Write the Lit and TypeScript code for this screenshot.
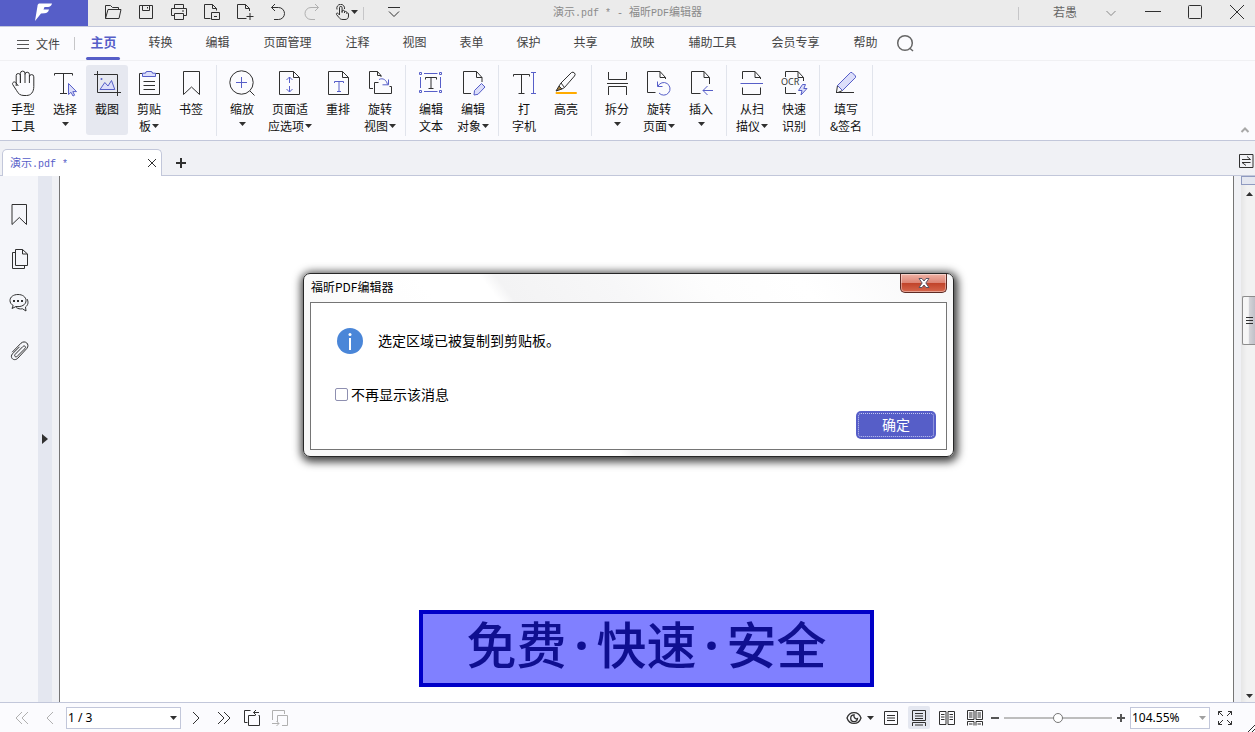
import { LitElement, html, svg, css, nothing } from "lit";
import type { SVGTemplateResult } from "lit";
import { customElement, state } from "lit/decorators.js";
import { classMap } from "lit/directives/class-map.js";

type Glyph = SVGTemplateResult;

/* Ribbon icons, drawn on a 32 x 32 grid. Class "a" is the accent stroke. */
const ribbonIcons: Record<string, Glyph> = {
  hand: svg`<path d="M9.2 19V8.6a2.1 2.1 0 0 1 4.2 0V16M13.4 16V6.4a2.3 2.3 0 0 1 4.6 0V16M18 7.4a2.2 2.2 0 0 1 4.4 0V16M22.4 9.8a2.2 2.2 0 0 1 4.4 0V19.500c0 5.500-2.800 9-7.300 9h-2.500c-3.800 0-5.800-1.800-7.300-4.800l-4-6.200c-.9-2 1.800-3.500 3.200-1.800l2.400 3.300"/>`,
  select: svg`<path d="M5.500 8.500V6.500H23.500V8.500M14.500 6.500V26.500M11 26.500H18"/><path class="a f" d="M19.500 16.500V27.500L22 25.300L24 29L25.600 28.200L23.800 24.600H27.500Z"/>`,
  crop: svg`<path d="M6.500 4V25.500H30M3 7.500H26.500V29"/><path class="a f" d="M9 22.500L13.800 15.500L17 19L20.500 13.500L23.800 22.500Z"/><circle class="dot" cx="10.500" cy="12" r="1"/>`,
  clipboard: svg`<path d="M9.500 6.500H6.500V27.500H26.500V6.500H22.500M10.500 14.500H22M10.500 18.500H22M10.500 22.500H22"/><path class="a f" d="M9.500 9.500V6.200H12.500Q12.500 4.500 14 4.500H18Q19.500 4.500 19.500 6.200H22.500V9.500Z"/>`,
  bookmark: svg`<path d="M8.500 4.500H24.500V27.500L16.500 20L8.500 27.500Z"/>`,
  zoom: svg`<circle cx="15.500" cy="15.500" r="11.700"/><path d="M24 24L28.500 28.500"/><path class="a" d="M10 15.500H21M15.500 10V21"/>`,
  fit: svg`<path d="M19.500 4.500H5.500V27.500H25.500V10.500L19.500 4.500V10.500H25.500"/><path class="a" d="M15.500 10V16M12.500 13L15.500 10L18.500 13M15.500 19V25M12.500 22L15.500 25L18.500 22"/>`,
  reflow: svg`<path d="M20.500 4.500H6.500V27.500H26.500V10.500L20.500 4.500V10.500H26.500"/><path class="a" d="M12.500 16V14.500H21.500V16M17 14.500V24.500M15 24.500H19"/>`,
  rotateView: svg`<path d="M9 21.500H5.500V4.500H13.500L17 8.500V10M13.500 4.500V8.500H17M14.500 15.500H10.500V26.500H27.500V19.500H25.500"/><path class="a" d="M15 12.500C19 10.500 22.500 13 23.500 17.500M24.500 12.500V17.800H18.500"/>`,
  editText: svg`<path d="M10.500 12.500V10.500H21.500V12.500M16 10.500V21.500M13.500 21.500H18.500"/><path class="a" d="M9 6.500H22.500M9 24.500H22.500M5.500 10V21M25.500 10V21M4.500 5.500h2v2h-2zM24.500 5.500h2v2h-2zM4.500 23.500h2v2h-2zM24.500 23.500h2v2h-2z"/>`,
  editObject: svg`<path d="M14 26.500H6.500V4.500H19.500L25 10.500V15M19.500 4.500V10.500H25"/><path class="a f" d="M17 28L17.500 23.500L24.500 16.500L28 20L21 27.300Z"/>`,
  typewriter: svg`<path d="M5.500 9.500V7.500H21.500V9.500M13.500 7.500V26.500M10.500 26.500H16.500"/><path class="a" d="M25.500 5.500V26.500M23 5.500H28M23 26.500H28"/>`,
  highlight: svg`<path d="M11 16L21.500 5.500Q23 4.500 24.500 6Q25.800 7.500 24.500 9L14.500 20.500ZM11 16L9 19L12 22L14.500 20.500"/><path class="pen" d="M6 24L9 19L12 22Z"/><path class="orange" d="M6.500 26H26"/>`,
  split: svg`<path d="M7.500 5V12.500H25.500V5M6 16.500H27M7.500 28V19.500H25.500V28"/>`,
  rotatePage: svg`<path d="M12.500 25.500H4.500V4.500H17L22.500 10.500V12M17 4.500V10.500H22.500"/><path class="a" d="M14.500 14.500V19.500H19.500M15 19.200A6.300 6.300 0 1 1 16 26"/>`,
  insert: svg`<path d="M15.500 26.500H6.500V4.500H19L24.500 10.500V17M19 4.500V10.500H24.500"/><path class="a" d="M28 23.500H18M22.500 19L18 23.500L22.500 28"/>`,
  scan: svg`<path d="M6.500 12V4.500H19L24.500 10.500V12M19 4.500V10.500H24.500M6.500 20.500V27.500H24.500V20.500"/><path class="a" d="M4.500 16.500H27"/>`,
  ocr: svg`<path d="M7.500 10V4.500H20L25.500 10.500V14M20 4.500V10.500H25.500M7.500 20V26.500H18"/><text x="3" y="18" class="ocr">OCR</text><path class="a f" d="M24.500 17.500L20.500 23.500H24L23 28L29 21.500H25.800L27.500 17.500Z"/>`,
  sign: svg`<path d="M6 25.500H24M6.500 25L7.500 18.500L12.500 23.500L8 25.500"/><path class="a f" d="M7.500 18.500L20.500 5.500H22L25.500 9V10.500L12.500 23.500Z"/>`,
};

/* Quick-access icons, 20 x 20. */
const quickIcons: Record<string, Glyph> = {
  open: svg`<path d="M2.500 16.500V3.500H7.500L9.500 5.500H15.500V7.500M2.500 16.500L5 7.500H18L16 16.500Z"/>`,
  save: svg`<path d="M3.500 3.500H16.500V16.500H3.500ZM6.500 3.500V8.500H13.500V3.500M11.500 5V6.500"/>`,
  print: svg`<path d="M5.500 6.500V2.500H14.500V6.500M5.500 13.500H2.500V6.500H17.500V13.500H14.500M5.500 11.500H14.500V17.500H5.500ZM13 9H15"/>`,
  pageBox: svg`<path d="M8.500 16.500H2.500V2.500H10.500L14.500 6.500V8.500M10.500 2.500V6.500H14.500M9.500 10.500H17.500V17.500H9.500ZM12 14.500H15"/>`,
  pageAdd: svg`<path d="M11.500 16.500H2.500V2.500H10.500L14.500 6.500V9M10.500 2.500V6.500H14.500M11.500 14.500H18.500M15 11V18"/>`,
  undo: svg`<path d="M7 2L3.500 5.500L7 9M3.500 5.500H10.500A5.600 5.600 0 0 1 10.500 17.500H6"/>`,
  redo: svg`<path class="dim" d="M14 2L17.500 5.500L14 9M17.500 5.500H10A5.600 5.600 0 0 0 10 17.500H14"/>`,
};

const viewIcons: Glyph[] = [
  svg`<path d="M3.500 3.500H16.500V16.500H3.500ZM6 7.500H14M6 10H14M6 12.500H14"/>`,
  svg`<path d="M3.500 2.500H16.500V12.500H3.500ZM6 5.500H14M6 8H14M6 10.500H14M3.500 18V14.500H16.500V18M6 17H14"/>`,
  svg`<path d="M2.500 3.500H9V16.500H2.500ZM11 3.500H17.500V16.500H11ZM4 6.500H7.500M4 9H7.500M4 11.500H7.500M12.500 6.500H16M12.500 9H16M12.500 11.500H16"/>`,
  svg`<path d="M2.500 2.500H9V11.500H2.500ZM11 2.500H17.500V11.500H11ZM4 5H7.500M4 7H7.500M4 9H7.500M12.500 5H16M12.500 7H16M12.500 9H16M2.500 17.500V13.500H9V17.500M11 17.500V13.500H17.500V17.500M4 16H7.500M12.500 16H16"/>`,
];

interface Tool {
  icon: string;
  lines: string[];
  menu?: boolean;
  wide?: boolean;
}

const groups: Tool[][] = [
  [
    { icon: "hand", lines: ["手型", "工具"] },
    { icon: "select", lines: ["选择", ""], menu: true },
    { icon: "crop", lines: ["截图"] },
    { icon: "clipboard", lines: ["剪贴", "板"], menu: true },
    { icon: "bookmark", lines: ["书签"] },
  ],
  [
    { icon: "zoom", lines: ["缩放", ""], menu: true },
    { icon: "fit", lines: ["页面适", "应选项"], menu: true, wide: true },
    { icon: "reflow", lines: ["重排"] },
    { icon: "rotateView", lines: ["旋转", "视图"], menu: true },
  ],
  [
    { icon: "editText", lines: ["编辑", "文本"] },
    { icon: "editObject", lines: ["编辑", "对象"], menu: true },
  ],
  [
    { icon: "typewriter", lines: ["打", "字机"] },
    { icon: "highlight", lines: ["高亮"] },
  ],
  [
    { icon: "split", lines: ["拆分", ""], menu: true },
    { icon: "rotatePage", lines: ["旋转", "页面"], menu: true },
    { icon: "insert", lines: ["插入", ""], menu: true },
  ],
  [
    { icon: "scan", lines: ["从扫", "描仪"], menu: true },
    { icon: "ocr", lines: ["快速", "识别"] },
  ],
  [{ icon: "sign", lines: ["填写", "&签名"] }],
];

const tabs = ["主页", "转换", "编辑", "页面管理", "注释", "视图", "表单", "保护", "共享", "放映", "辅助工具", "会员专享", "帮助"];

const sideIcons: { name: string; glyph: Glyph }[] = [
  { name: "书签", glyph: svg`<path d="M5 1.500H19.500V21.500L12.300 14.500L5 21.500Z"/>` },
  { name: "页面", glyph: svg`<path d="M8.500 2.500H15.500L20.500 7V18.500H8.500ZM15.500 2.500V7H20.500M8.500 5.500H5.500V21.500H17.500V18.500"/>` },
  {
    name: "注释",
    glyph: svg`<path d="M11 3.500C6.300 3.500 3 6 3 9.500C3 11.700 4.200 13.400 6.200 14.500L5 17.500L9 15.500C14.500 16.300 19 13.700 19 9.700C19 6 15.700 3.500 11 3.500ZM20 8C21.800 11 21 14.300 18.500 16L19 20L15.500 17.800C13 18.200 10.800 17.700 9.200 16.500"/><path class="dots" d="M6 9h2v2h-2zM10 9h2v2h-2zM14 9h2v2h-2z"/>`,
  },
  { name: "附件", glyph: svg`<path d="M18 9.500L10.300 17.200C8.600 18.800 6.700 17 8.200 15.300L15.800 7.600M15.800 7.600C17.500 6 19.500 7.800 18 9.500M5.200 13.200L14 4.200C18 .6 23.300 5.300 19.800 9.500L10.800 19.200C7 23 2.200 18.500 5.500 14.800L12.500 7.800"/>` },
];

@customElement("app-root")
export class AppRoot extends LitElement {
  @state() private activeTab = "主页";
  @state() private activeTool = "crop";
  @state() private dialogOpen = true;

  static styles = css`
    :host {
      display: flex;
      flex-direction: column;
      position: relative;
      height: 100vh;
      overflow: hidden;
      background: #fbfbfe;
      color: #1c1c1c;
      font-family: "Noto Sans CJK SC", "Noto Sans", sans-serif;
      font-size: 12px;
      line-height: 17px;
    }
    * {
      box-sizing: border-box;
    }
    button {
      display: flex;
      align-items: center;
      justify-content: center;
      margin: 0;
      padding: 0;
      border: 0;
      background: none;
      color: inherit;
      font: inherit;
    }
    svg {
      display: block;
      flex: none;
      fill: none;
      stroke: #303030;
      stroke-width: 1;
    }
    .dim { stroke: #b0b0b0; }
    .a { stroke: #565ec8; }
    .f { fill: #dcdefa; }
    .dot { fill: #565ec8; stroke: none; }
    .dots { fill: #303030; stroke: none; }
    .pen { fill: #a07a3a; }
    .orange { stroke: #ffab00; stroke-width: 2; stroke-linecap: round; }
    .ocr {
      fill: #303030;
      stroke: none;
      font: 9px "Noto Sans", sans-serif;
    }
    .caret { fill: #303030; stroke: none; }
    .caret.soft { fill: #a0a0a0; }

    .titlebar {
      display: grid;
      grid-template-columns: 1fr auto 1fr;
      align-items: center;
      flex: none;
      height: 27px;
      background: #ebebeb;
      border-bottom: 1px solid #c2c7da;
    }
    .quick, .window { display: flex; align-items: center; height: 26px; }
    .window { justify-content: flex-end; gap: 6px; }
    .logo {
      display: flex;
      justify-content: center;
      width: 88px;
      height: 26px;
      margin-right: 8px;
      background: #565ec8;
    }
    .logo path { fill: #fff; stroke: none; }
    .quick button { width: 33px; height: 26px; padding-bottom: 2px; }
    .quick .touch { gap: 2px; width: 36px; }
    .vline { flex: none; width: 1px; height: 13px; background: #c6c6c8; }
    .quick .more { margin-left: 13px; }
    .doc-name {
      font: 10px "Liberation Mono", "Noto Sans CJK SC", monospace;
      color: #8a8a8a;
      line-height: 16px;
      white-space: pre;
    }
    .titlebar .doc-name { padding-bottom: 2px; }
    .doc-name .cjk { font-family: "Noto Sans CJK SC", sans-serif; font-size: 11px; }
    .user { margin: 0 10px 0 28px; padding-bottom: 3px; color: #666; }
    .window button { width: 36px; height: 26px; padding-bottom: 1px; }

    .menubar {
      display: flex;
      align-items: center;
      flex: none;
      height: 34px;
      border-bottom: 1px solid #f0f0f3;
      color: #444;
    }
    .file { gap: 7px; width: 74px; height: 33px; padding-left: 3px; }
    .tabs { display: flex; height: 33px; }
    .tab { position: relative; width: 57px; padding-bottom: 4px; white-space: nowrap; }
    .tab.long { width: 83px; }
    .tab.on { color: #565ec8; font-size: 13px; font-weight: 700; }
    .tab.on::after {
      content: "";
      position: absolute;
      left: 11px;
      right: 12px;
      bottom: 0;
      height: 3px;
      border-radius: 2px;
      background: #565ec8;
    }
    .search { width: 22px; height: 32px; padding-bottom: 1px; }

    .ribbon {
      display: flex;
      align-items: flex-start;
      flex: none;
      height: 80px;
      padding: 4px 2px;
      border-bottom: 1px solid #c2c7da;
    }
    .group { display: flex; }
    .group::after {
      content: "";
      width: 1px;
      height: 71px;
      margin: 0 4px;
      background: #e1e4ec;
    }
    .tool {
      flex-direction: column;
      justify-content: flex-start;
      width: 42px;
      height: 70px;
      padding-top: 2px;
      border-radius: 3px;
      color: #111;
    }
    .tool.wide { width: 54px; }
    .group:last-of-type .tool { width: 44px; }
    .tool.on { background: #e6e8f0; }
    .line {
      display: flex;
      align-items: center;
      justify-content: center;
      gap: 1px;
      height: 17px;
      white-space: nowrap;
    }
    .line.lone { height: 14px; }
    .tool svg + .line { margin-top: 1px; }
    .fold { align-self: flex-end; margin-left: auto; width: 16px; height: 12px; }
    .fold svg { stroke: #a8a8a8; stroke-width: 2; }

    .docbar {
      display: flex;
      align-items: flex-end;
      flex: none;
      height: 35px;
      padding-left: 2px;
      background: #f0f1f5;
      border-bottom: 1px solid #c2c7da;
    }
    .doc-tab {
      display: flex;
      align-items: center;
      justify-content: space-between;
      width: 160px;
      height: 27px;
      margin-bottom: -1px;
      padding: 0 3px 0 7px;
      border: 1px solid #c2c7da;
      border-bottom: 0;
      border-radius: 5px 5px 0 0;
      background: #fff;
    }
    .doc-tab .doc-name { color: #565ec8; text-decoration: none; }
    .doc-tab button, .docbar .add { width: 12px; height: 25px; }
    .docbar .add { margin-left: 13px; }
    .docbar .swap { margin-left: auto; width: 18px; height: 28px; }

    .main { display: flex; flex: 1; min-height: 0; overflow: hidden; }
    .side {
      display: flex;
      flex-direction: column;
      flex: none;
      width: 38px;
      padding-top: 17px;
      background: #f5f6fa;
    }
    .side button { height: 44px; }
    .side button:last-child { margin-top: 4px; }
    .handle { flex: none; width: 14px; background: #e4e7f0; }
    .gutter { flex: none; width: 8px; background: #f0f1f5; border-right: 1px solid #757575; }
    .page {
      display: flex;
      flex-direction: column;
      align-items: center;
      justify-content: flex-end;
      flex: 1;
      min-width: 0;
      padding-bottom: 15px;
      background: #fff;
    }
    .banner {
      padding: 0 43px 12px;
      border: 4px solid #0000c8;
      background: #8080ff;
      color: #0f0f90;
      font-size: 50px;
      font-weight: 500;
      line-height: 57px;
      white-space: nowrap;
    }
    .sep { padding: 0 8px; font-family: "Noto Sans", sans-serif; font-weight: 700; line-height: 1; }
    .edge { flex: none; width: 8px; background: #f0f1f5; border-left: 1px solid #757575; }
    .scroll {
      display: flex;
      flex-direction: column;
      align-items: stretch;
      flex: none;
      width: 14px;
      background: linear-gradient(90deg, #e6e6e6, #f2f2f2 6px);
    }
    .split { height: 9px; border: 1px solid #8f9ac0; border-right: 0; background: #e4e7f0; }
    .scroll button { height: 17px; padding-left: 3px; }
    .scroll button:last-child { height: 12px; }
    .thumb {
      display: flex;
      align-items: center;
      height: 49px;
      margin: 94px 0 auto 1px;
      padding-left: 3px;
      border: 1px solid #8c8c8c;
      border-right: 0;
      border-radius: 2px 0 0 2px;
      background: linear-gradient(90deg, #f6f6f6 45%, #d4d4d8 50%, #c0c0c8);
    }

    .status {
      display: flex;
      align-items: center;
      justify-content: space-between;
      flex: none;
      height: 30px;
      border-top: 1px solid #c2c7da;
    }
    .bar { display: flex; align-items: center; height: 29px; }
    .bar > button { width: 28px; height: 23px; }
    .nav { padding-left: 8px; }
    .box { position: relative; display: flex; align-items: center; }
    .box select {
      appearance: none;
      height: 22px;
      width: 80px;
      margin: 0;
      padding: 0 0 0 1px;
      border: 1px solid #c2c7da;
      border-radius: 0;
      background: #fff;
      color: #000;
      font: 12px "Noto Sans", sans-serif;
    }
    .box.pages { margin: 0 1px 0 2px; }
    .box.pages select { width: 115px; }
    .box .caret { position: absolute; right: 4px; pointer-events: none; }
    .bar .eye { width: 34px; gap: 5px; margin-right: 3px; }
    .bar .view { width: 22px; margin-right: 6px; border-radius: 2px; }
    .bar .view.on { background: #e4e7f0; }
    .bar .step { width: 10px; margin-right: 4px; }
    .bar .step svg { stroke: #555; stroke-width: 2; }
    .slider {
      appearance: none;
      width: 108px;
      height: 12px;
      margin: 0 4px 0 0;
      background: linear-gradient(#bdbdbd, #bdbdbd) center / 100% 2px no-repeat;
    }
    .slider::-webkit-slider-thumb {
      appearance: none;
      width: 10px;
      height: 10px;
      border: 1px solid #777;
      border-radius: 50%;
      background: #fff;
    }
    .views { display: flex; margin-right: -2px; }
    .views button { height: 23px; }
    .bar .full { width: 30px; margin-right: 0; }
    .grip { align-self: flex-end; margin-left: 7px; }

    .dialog {
      position: absolute;
      left: 303px;
      top: 273px;
      display: flex;
      flex-direction: column;
      width: 651px;
      margin: 0;
      padding: 0 6px 6px;
      border: 1px solid #262626;
      border-radius: 7px;
      background: linear-gradient(52deg, #f7f7f7 12%, #fdfdfd 24%, #fff 32%, #fff 40%, #f3f3f4 42%, #f7f7f8 56%, #fdfdfd 68%, #fff 80%, #f7f7f8);
      box-shadow: 1px 2px 9px 3px rgba(0, 0, 0, 0.75);
      color: #000;
    }
    .head {
      display: flex;
      align-items: flex-start;
      justify-content: space-between;
      height: 28px;
    }
    .head h1 { margin: 0; padding: 4px 0 0 1px; font-size: 12px; font-weight: 400; }
    .close {
      width: 47px;
      height: 19px;
      border: 1px solid #5c2a24;
      border-top: 0;
      border-radius: 0 0 5px 5px;
      background: linear-gradient(#f0b3a6, #dd8575 48%, #c04229 50%, #d6674d);
      box-shadow: inset 0 0 0 1px rgba(255, 255, 255, 0.4);
    }
    .body {
      display: flex;
      flex-direction: column;
      height: 148px;
      padding: 24px 10px 10px 24px;
      border: 1px solid #757575;
      background: #fff;
      font-size: 14px;
      line-height: 20px;
    }
    .message { display: flex; align-items: center; gap: 14px; margin: 0; padding-left: 1px; height: 28px; }
    .message span { padding-bottom: 2px; }
    .again { display: flex; align-items: center; gap: 3px; margin-top: 29px; }
    .again input {
      appearance: none;
      width: 13px;
      height: 13px;
      margin: 0;
      border: 1px solid #8e8fb0;
      border-radius: 2px;
      background: #fff;
    }
    .ok {
      align-self: flex-end;
      margin-top: auto;
      width: 80px;
      height: 28px;
      padding-bottom: 2px;
      border-radius: 5px;
      background: #565ec8;
      color: #fff;
      outline: 1px dotted #c5c8f2;
      outline-offset: -3px;
    }
  `;

  private icon(size: number, glyph: Glyph) {
    return html`<svg width=${size} height=${size} viewBox="0 0 ${size} ${size}" aria-hidden="true">${glyph}</svg>`;
  }

  private caret(soft = false) {
    return html`<svg class=${classMap({ caret: true, soft })} width="7" height="4" viewBox="0 0 7 4" aria-hidden="true"><path d="M0 0H7L3.500 4Z" /></svg>`;
  }

  private docName(rest: unknown = nothing) {
    return html`<span class="cjk">演示</span>.pdf *${rest}`;
  }

  private renderTitle() {
    return html`<header class="titlebar">
      <div class="quick">
        <div class="logo">
          <svg width="24" height="26" viewBox="0 0 24 26" role="img" aria-label="福昕"><path d="M7 3.500H20C19.500 5.500 18 7 16 7H12.500L11.500 9.500H17C16.300 12 15 13.200 12.500 13.300L9 13.600L3 21L5.500 6C5.700 4.500 6 4 7 3.500Z" /></svg>
        </div>
        ${Object.entries(quickIcons).map(([name, g]) => html`<button aria-label=${name}>${this.icon(20, g)}</button>`)}
        <button class="touch" aria-label="touch">
          ${this.icon(16, svg`<path d="M6.500 11V3.700a1.300 1.300 0 0 1 2.600 0V8.500V7.500a1.200 1.200 0 0 1 2.400 0V9V8.500a1.100 1.100 0 0 1 2.200 0V9.500a1 1 0 0 1 1.800 0V12C15.500 14.500 14 15.500 12 15.500H10C8 15.500 7 15 6 13.500L3.500 10.500C2.800 9.300 4.300 8.500 5.200 9.500L6.500 11M4 5.500A3.900 3.900 0 1 1 11.500 5"/>`)}
          ${this.caret()}
        </button>
        <span class="vline"></span>
        <button class="more" aria-label="more">${this.icon(16, svg`<path d="M2 3.500H14M3 7.500L8 12.500L13 7.500"/>`)}</button>
      </div>
      <div class="doc-name">${this.docName(html` - <span class="cjk">福昕</span>PDF<span class="cjk">编辑器</span>`)}</div>
      <div class="window">
        <span class="vline"></span>
        <span class="user">若愚</span>
        <button aria-label="account">${this.icon(12, svg`<path stroke="#888" d="M1.500 4L6 8.500L10.500 4"/>`)}</button>
        <button aria-label="minimize">${this.icon(20, svg`<path d="M2 8.500H18"/>`)}</button>
        <button aria-label="maximize">${this.icon(20, svg`<rect x="3.500" y="2.500" width="13" height="13" rx="1"/>`)}</button>
        <button aria-label="close">${this.icon(20, svg`<path d="M3 2L17 16M17 2L3 16"/>`)}</button>
      </div>
    </header>`;
  }

  private renderMenu() {
    return html`<nav class="menubar">
      <button class="file">${this.icon(12, svg`<path stroke="#555" d="M0 2.500H12M0 6.500H12M0 10.500H12"/>`)}文件</button>
      <span class="vline"></span>
      <div class="tabs">
        ${tabs.map(
          (t) => html`<button
            class=${classMap({ tab: true, long: t.length > 2, on: t === this.activeTab })}
            @click=${() => (this.activeTab = t)}
          >${t}</button>`,
        )}
      </div>
      <button class="search" aria-label="search">${this.icon(20, svg`<g stroke="#666" stroke-width="1.500"><circle cx="10" cy="10" r="7.300"/><path d="M14.500 15L18 18"/></g>`)}</button>
    </nav>`;
  }

  private renderTool(t: Tool) {
    return html`<button
      class=${classMap({ tool: true, wide: !!t.wide, on: t.icon === this.activeTool })}
      aria-label=${t.lines.join("")}
      @click=${() => (this.activeTool = t.icon)}
    >
      ${this.icon(32, ribbonIcons[t.icon])}
      ${t.lines.map(
        (l, i) => html`<span class=${classMap({ line: true, lone: l === "" })}>${l}${t.menu && i === 1 ? this.caret() : nothing}</span>`,
      )}
    </button>`;
  }

  private renderDialog() {
    return html`<section class="dialog" role="dialog" aria-labelledby="dialog-title">
      <div class="head">
        <h1 id="dialog-title">福昕PDF编辑器</h1>
        <button class="close" aria-label="关闭" @click=${() => (this.dialogOpen = false)}>
          <svg width="14" height="12" viewBox="0 0 14 12"><path d="M2 1.500H5L7 4L9 1.500H12L8.800 6L12 10.500H9L7 8L5 10.500H2L5.200 6Z" fill="#fff" stroke="#5a5563" /></svg>
        </button>
      </div>
      <div class="body">
        <p class="message">
          <svg width="28" height="28" viewBox="0 0 28 28" aria-hidden="true"><circle cx="14" cy="14" r="13" fill="#4a86d8" stroke="none" /><path d="M14 11V23" stroke="#fff" stroke-width="2" /><circle cx="14" cy="7.500" r="1.500" fill="#fff" stroke="none" /></svg>
          <span>选定区域已被复制到剪贴板。</span>
        </p>
        <label class="again"><input type="checkbox" />不再显示该消息</label>
        <button class="ok" @click=${() => (this.dialogOpen = false)}>确定</button>
      </div>
    </section>`;
  }

  private renderStatus() {
    return html`<footer class="status">
      <div class="bar nav">
        <button aria-label="first">${this.icon(16, svg`<path class="dim" d="M8 2L2 8L8 14M14 2L8 8L14 14"/>`)}</button>
        <button aria-label="previous">${this.icon(16, svg`<path class="dim" d="M11 2L5 8L11 14"/>`)}</button>
        <div class="box pages">
          <select aria-label="page"><option>1 / 3</option><option>2 / 3</option><option>3 / 3</option></select>${this.caret()}
        </div>
        <button aria-label="next">${this.icon(16, svg`<path d="M5 2L11 8L5 14"/>`)}</button>
        <button aria-label="last">${this.icon(16, svg`<path d="M2 2L8 8L2 14M8 2L14 8L8 14"/>`)}</button>
        <button aria-label="back">${this.icon(20, svg`<path d="M5.500 14.500H2.500V2.500H8.500M13.500 7.500H6.500V17.500H17.500V7.500H16.500M17 4.500H11.500M14 2L11.500 4.500L14 7"/>`)}</button>
        <button aria-label="forward">${this.icon(20, svg`<path class="dim" d="M2.500 12V2.500H14.500V6M7.500 14V7.500H17.500V17.500H12M2 15.500H9M6.500 13L9 15.500L6.500 18"/>`)}</button>
      </div>
      <div class="bar">
        <button class="eye" aria-label="reading mode">
          ${this.icon(16, svg`<path stroke-width="1.300" d="M1 8C3.500 .8 12.500 .8 15 8C12.500 15.200 3.500 15.200 1 8Z"/><path stroke-width="1.300" d="M8 4.800A3.400 3.400 0 1 0 11.500 8.500C9.500 9.500 7.500 7.500 8 4.800Z"/>`)}${this.caret()}
        </button>
        <div class="views">
          ${viewIcons.map((g, i) => html`<button class=${classMap({ view: true, on: i === 1 })} aria-label=${`view ${i + 1}`}>${this.icon(20, g)}</button>`)}
        </div>
        <button class="step" aria-label="zoom out">${this.icon(10, svg`<path d="M1 5H9"/>`)}</button>
        <input class="slider" type="range" min="0" max="100" value="50" aria-label="zoom" />
        <button class="step" aria-label="zoom in">${this.icon(10, svg`<path d="M1 5H9M5 1V9"/>`)}</button>
        <div class="box"><select aria-label="zoom level"><option>104.55%</option><option>100%</option></select>${this.caret(true)}</div>
        <button class="full" aria-label="full screen">${this.icon(16, svg`<path d="M1.500 5V1.500H5M1.500 1.500L6 6M11 1.500H14.500V5M14.500 1.500L10 6M1.500 11V14.500H5M1.500 14.500L6 10M11 14.500H14.500V11M14.500 14.500L10 10"/>`)}</button>
        <svg class="grip" width="8" height="8" viewBox="0 0 8 8"><path d="M1 8L8 1M5 8L8 5" /></svg>
      </div>
    </footer>`;
  }

  render() {
    return html`
      ${this.renderTitle()} ${this.renderMenu()}
      <div class="ribbon">
        ${groups.map((g) => html`<div class="group">${g.map((t) => this.renderTool(t))}</div>`)}
        <button class="fold" aria-label="collapse ribbon">${this.icon(10, svg`<path d="M1.500 7L5 3.500L8.500 7"/>`)}</button>
      </div>
      <div class="docbar">
        <div class="doc-tab">
          <a class="doc-name" href="#doc">${this.docName()}</a>
          <button aria-label="close tab">${this.icon(10, svg`<path d="M1 1L9 9M9 1L1 9"/>`)}</button>
        </div>
        <button class="add" aria-label="new tab">${this.icon(12, svg`<path stroke-width="2" d="M1 6H11M6 1V11"/>`)}</button>
        <button class="swap" aria-label="switch">${this.icon(16, svg`<path d="M1.500 1.500H15V14.500H1.500ZM4 6.500H12.500L9 3.500M12.500 9.500H4L8 12.500"/>`)}</button>
      </div>
      <main class="main">
        <aside class="side">
          ${sideIcons.map((s) => html`<button aria-label=${s.name}>${this.icon(24, s.glyph)}</button>`)}
        </aside>
        <button class="handle" aria-label="expand panel"><svg class="caret" width="6" height="10" viewBox="0 0 6 10"><path d="M0 0L6 5L0 10Z" /></svg></button>
        <div class="gutter"></div>
        <article class="page">
          <div class="banner">免费<span class="sep">·</span>快速<span class="sep">·</span>安全</div>
        </article>
        <div class="edge"></div>
        <div class="scroll">
          <div class="split"></div>
          <button aria-label="scroll up"><svg class="caret" width="7" height="4" viewBox="0 0 7 4"><path d="M0 4H7L3.500 0Z" /></svg></button>
          <div class="thumb"><svg width="8" height="9" viewBox="0 0 8 9"><path d="M0 1.500H7M0 4.500H7M0 7.500H7" /></svg></div>
          <button aria-label="scroll down">${this.caret()}</button>
        </div>
      </main>
      ${this.renderStatus()} ${this.dialogOpen ? this.renderDialog() : nothing}
    `;
  }
}
